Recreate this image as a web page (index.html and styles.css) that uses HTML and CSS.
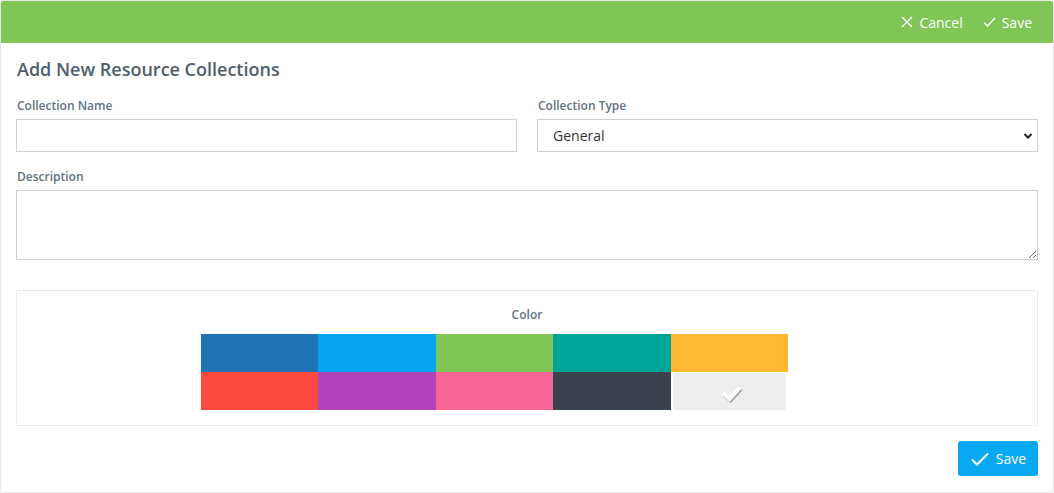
FILE: index.html
```html
<!DOCTYPE html>
<html>
<head>
<meta charset="utf-8">
<link rel="stylesheet" href="styles.css">
</head>
<body>
<div class="card">
  <div class="topbar">
    <span class="top-action"><svg width="12" height="12" viewBox="0 0 12 12"><path d="M1 1L11 11M11 1L1 11" stroke="#fff" stroke-width="1.5" fill="none"/></svg>Cancel</span>
    <span class="top-action"><svg width="13" height="12" viewBox="0 0 13 12"><path d="M1 6.5L4.5 10L12 2" stroke="#fff" stroke-width="1.5" fill="none"/></svg>Save</span>
  </div>
  <div class="content">
    <h1 class="title">Add New Resource Collections</h1>
    <div class="row">
      <div class="field">
        <label class="lbl">Collection Name</label>
        <input class="ctl" type="text">
      </div>
      <div class="field">
        <label class="lbl">Collection Type</label>
        <div class="select">
          <span>General</span>
          <svg width="10" height="8" viewBox="0 0 10 8"><path d="M1.5 2L5 5.5L8.5 2" stroke="#222" stroke-width="2" fill="none"/></svg>
        </div>
      </div>
    </div>
    <div class="field">
      <label class="lbl">Description</label>
      <textarea class="ctl area"></textarea>
    </div>
    <div class="colorbox">
      <div class="color-lbl">Color</div>
      <div class="swatches">
        <div class="sw" style="background:#1f74b5"></div>
        <div class="sw" style="background:#06a5ef"></div>
        <div class="sw" style="background:#81c557"></div>
        <div class="sw" style="background:#00a598"></div>
        <div class="sw" style="background:#fdb733"></div>
        <div class="sw" style="background:#fc4a3f"></div>
        <div class="sw" style="background:#b341b9"></div>
        <div class="sw" style="background:#f76496"></div>
        <div class="sw" style="background:#3a424e"></div>
        <div class="sw sel"><svg class="check" width="24" height="20" viewBox="0 0 24 20"><path d="M3 10L9.5 16L20 4.5" stroke="#a2a6aa" stroke-width="4" fill="none" transform="translate(1,1.5)"/><path d="M3 10L9.5 16L20 4.5" stroke="#ffffff" stroke-width="4" fill="none"/></svg></div>
      </div>
    </div>
    <div class="actions">
      <button class="btn"><svg width="20" height="16" viewBox="0 0 20 16"><path d="M2 8.5L7 13.5L18 2.5" stroke="#fff" stroke-width="2" fill="none"/></svg>Save</button>
    </div>
  </div>
</div>
</body>
</html>
```
FILE: styles.css
```css
* { box-sizing: border-box; }
body {
  margin: 0;
  font-family: "Open Sans", "Liberation Sans", sans-serif;
  background: #fff;
}
.card {
  width: 1054px;
  height: 493px;
  border: 1px solid #e4e7eb;
  border-radius: 3px;
  background: #fff;
}
.topbar {
  height: 42px;
  background: #81c557;
  display: flex;
  justify-content: flex-end;
  align-items: center;
  gap: 20px;
  padding-right: 21px;
  border-radius: 2px 2px 0 0;
}
.top-action {
  color: #fff;
  font-size: 14px;
  display: flex;
  align-items: center;
  gap: 6px;
}
.content {
  padding: 0 15px;
}
.title {
  margin: 14px 0 0 1px;
  font-size: 18px;
  font-weight: 600;
  color: #4e5e6e;
  line-height: 24px;
}
.row {
  display: flex;
  gap: 20px;
  margin-top: 17px;
}
.row .field { flex: 1; }
.field { display: flex; flex-direction: column; }
.lbl {
  font-size: 12px;
  font-weight: 600;
  color: #617282;
  line-height: 16px;
  margin: 0 0 5px 1px;
}
.ctl {
  height: 33px;
  border: 1px solid #d0d0d0;
  border-radius: 0;
  font-family: inherit;
  background: #fff;
}
.select {
  height: 33px;
  border: 1px solid #d0d0d0;
  display: flex;
  align-items: center;
  justify-content: space-between;
  padding: 0 4px 0 15px;
  font-size: 14px;
  color: #333;
}
.row + .field { margin-top: 17px; }
.area {
  height: 70px;
  resize: vertical;
}
.colorbox {
  margin-top: 30px;
  border: 1px solid #ececec;
  height: 136px;
  display: flex;
  flex-direction: column;
  align-items: center;
}
.color-lbl {
  font-size: 12px;
  font-weight: 600;
  color: #617282;
  margin-top: 16px;
  line-height: 16px;
}
.swatches {
  margin-top: 11px;
  align-self: flex-start;
  margin-left: 184px;
  width: 587px;
  display: grid;
  grid-template-columns: repeat(5, 1fr);
  grid-auto-rows: 38px;
}
.sw.sel {
  background: #eceff0;
  margin: 1px 2px 0 2px;
  border-radius: 2px;
  display: flex;
  align-items: center;
  justify-content: center;
}
.check { margin: 2px 0 0 6px; }
.actions {
  display: flex;
  justify-content: flex-end;
  margin-top: 15px;
}
.btn {
  width: 80px;
  height: 35px;
  border: none;
  border-radius: 3px;
  background: #09a9f2;
  color: #fff;
  font-family: inherit;
  font-size: 14px;
  display: flex;
  align-items: center;
  justify-content: center;
  gap: 6px;
  padding: 0;
}
```
